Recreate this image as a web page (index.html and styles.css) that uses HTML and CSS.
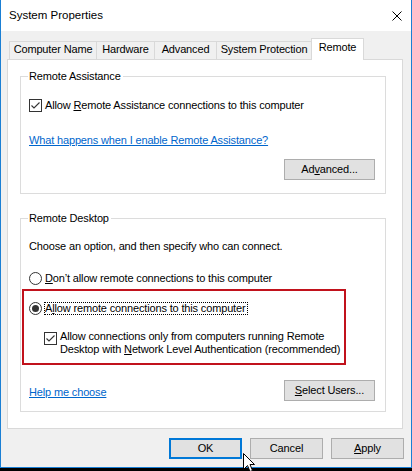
FILE: index.html
```
<!DOCTYPE html>
<html>
<head>
<meta charset="utf-8">
<title>System Properties</title>
<link rel="stylesheet" href="styles.css">
</head>
<body>
<div class="window">
  <div class="titlebar">
    <span class="title">System Properties</span>
    <svg class="close" width="10" height="10" viewBox="0 0 10 10"><path d="M0.5 0.5 L9.5 9.5 M9.5 0.5 L0.5 9.5" stroke="#000" stroke-width="1" fill="none"/></svg>
  </div>
  <div class="client">
    <div class="tabs">
      <div class="tab tab-cn">Computer Name</div>
      <div class="tab tab-hw">Hardware</div>
      <div class="tab tab-adv">Advanced</div>
      <div class="tab tab-sp">System Protection</div>
      <div class="tab tab-remote selected">Remote</div>
    </div>
    <div class="panel">
      <fieldset class="group g1">
        <legend>Remote Assistance</legend>
        <div class="check-row">
          <svg class="box" width="13" height="13" viewBox="0 0 13 13"><rect x="0.5" y="0.5" width="12" height="12" fill="#fff" stroke="#333"/><path d="M2.5 6.5 L5 9 L10.5 3.5" stroke="#333" stroke-width="1.1" fill="none"/></svg>
          <span>Allow <u>R</u>emote Assistance connections to this computer</span>
        </div>
        <div class="link-row"><a class="link" href="#">What happens when I enable Remote Assistance?</a></div>
        <div class="btn-row"><div class="btn">Ad<u>v</u>anced...</div></div>
      </fieldset>
      <fieldset class="group g2">
        <legend>Remote Desktop</legend>
        <div class="choose">Choose an option, and then specify who can connect.</div>
        <div class="radio-row">
          <svg class="box" width="13" height="13" viewBox="0 0 13 13"><circle cx="6.5" cy="6.5" r="6" fill="#fff" stroke="#333"/></svg>
          <span><u>D</u>on’t allow remote connections to this computer</span>
        </div>
        <div class="redbox">
          <div class="radio-row sel">
            <svg class="box" width="13" height="13" viewBox="0 0 13 13"><circle cx="6.5" cy="6.5" r="6" fill="#fff" stroke="#333"/><circle cx="6.5" cy="6.5" r="3.5" fill="#333"/></svg>
            <span class="focus">A<u>l</u>low remote connections to this computer</span>
          </div>
          <div class="check-row nla">
            <svg class="box" width="13" height="13" viewBox="0 0 13 13"><rect x="0.5" y="0.5" width="12" height="12" fill="#fff" stroke="#333"/><path d="M2.5 6.5 L5 9 L10.5 3.5" stroke="#333" stroke-width="1.1" fill="none"/></svg>
            <span>Allow connections only from computers running Remote<br>Desktop with <u>N</u>etwork Level Authentication (recommended)</span>
          </div>
        </div>
        <div class="help-row">
          <a class="link help" href="#">Help me choose</a>
          <div class="btn"><u>S</u>elect Users...</div>
        </div>
      </fieldset>
    </div>
    <div class="dlg-buttons">
      <div class="dbtn ok">OK</div>
      <div class="dbtn">Cancel</div>
      <div class="dbtn"><u>A</u>pply</div>
    </div>
  </div>
</div>
<svg class="cursor" width="13" height="20" viewBox="0 0 13 20"><path d="M0.5 0.5 L0.5 16.5 L4.5 12.5 L7 18.5 L9.5 17.5 L7 11.5 L11.5 11.5 Z" fill="#fff" stroke="#000" stroke-width="1" stroke-linejoin="miter"/></svg>
</body>
</html>
```
FILE: styles.css
```
* { box-sizing: border-box; }

html, body {
  margin: 0;
  background: #000;
}

body {
  width: 412px;
  height: 471px;
  font-family: "Liberation Sans", Arial, sans-serif;
  font-size: 11px;
  line-height: 13px;
  letter-spacing: -0.15px;
  color: #000;
  position: relative;
  overflow: hidden;
}

.window {
  width: 412px;
  height: 468px;
  background: #f0f0f0;
  border: 1px solid #1a7fd4;
  border-top: none;
  display: flex;
  flex-direction: column;
}

.titlebar {
  height: 31px;
  background: #fff;
  display: flex;
  align-items: center;
  justify-content: space-between;
  padding: 0 9px 0 8px;
  flex: none;
}

.title {
  font-size: 11.5px;
  letter-spacing: 0;
}

.close { display: block; }

.client {
  padding-top: 7px;
}

.tabs {
  display: flex;
  align-items: flex-end;
  margin-left: 8px;
  height: 22px;
  margin-bottom: -1px;
}

.tab {
  height: 18px;
  margin-bottom: 1px;
  border-left: 1px solid #d9d9d9;
  border-top: 1px solid #d9d9d9;
  background: #f0f0f0;
  text-align: center;
  line-height: 15px;
  white-space: nowrap;
}

.tab-cn { width: 87px; }
.tab-hw { width: 58px; }
.tab-adv { width: 62px; }
.tab-sp { width: 95px; }

.tab.selected {
  width: 53px;
  height: 22px;
  margin-bottom: 0;
  border-right: 1px solid #d9d9d9;
  background: #fff;
  line-height: 13px;
  padding-top: 2px;
  position: relative;
  z-index: 1;
}

.panel {
  margin-left: 6px;
  width: 396px;
  background: #fff;
  border: 1px solid #d9d9d9;
  padding: 10px 0 16px 12px;
}

.group {
  margin: 0;
  width: 366px;
  min-width: 0;
  border: 1px solid #dcdcdc;
  padding: 16px 10px 13px 8px;
}

.group legend {
  padding: 0 2px 0 1px;
  margin-left: -1px;
  line-height: 13px;
}

.g2 {
  margin-top: 18px;
  padding: 15px 10px 10px 8px;
}

.box {
  display: block;
  flex: none;
}

.check-row,
.radio-row {
  display: flex;
  align-items: center;
  gap: 3px;
  white-space: nowrap;
}

.link {
  color: #0066cc;
  text-decoration: underline;
}

.link-row {
  margin-top: 22px;
}

.btn-row {
  margin-top: 12px;
  display: flex;
  justify-content: flex-end;
}

.btn,
.dbtn {
  height: 21px;
  background: #e1e1e1;
  border: 1px solid #adadad;
  display: flex;
  align-items: center;
  justify-content: center;
  white-space: nowrap;
}

.btn { width: 91px; }

.radio-row {
  margin-top: 19px;
}

.redbox {
  margin: 4px 0 0 -7px;
  width: 324px;
  border: 2px solid #c1121c;
  padding: 11px 0 7px 5px;
}

.radio-row.sel {
  margin-top: 0;
  gap: 2px;
}

.focus {
  border: 1px dotted #000;
  line-height: 11px;
  padding-right: 1px;
}

.check-row.nla {
  margin-top: 15px;
  margin-left: 15px;
  align-items: flex-start;
}

.check-row.nla .box {
  margin-top: 2px;
}

.help-row {
  margin-top: 15px;
  display: flex;
  justify-content: space-between;
  align-items: flex-start;
}

.help {
  margin-top: 6px;
}

.dlg-buttons {
  display: flex;
  justify-content: flex-end;
  gap: 8px;
  padding-right: 7px;
  margin-top: 9px;
}

.dbtn { width: 73px; }

.dbtn.ok {
  border: 2px solid #0078d7;
}

.cursor {
  position: absolute;
  left: 243px;
  top: 453px;
}
```
